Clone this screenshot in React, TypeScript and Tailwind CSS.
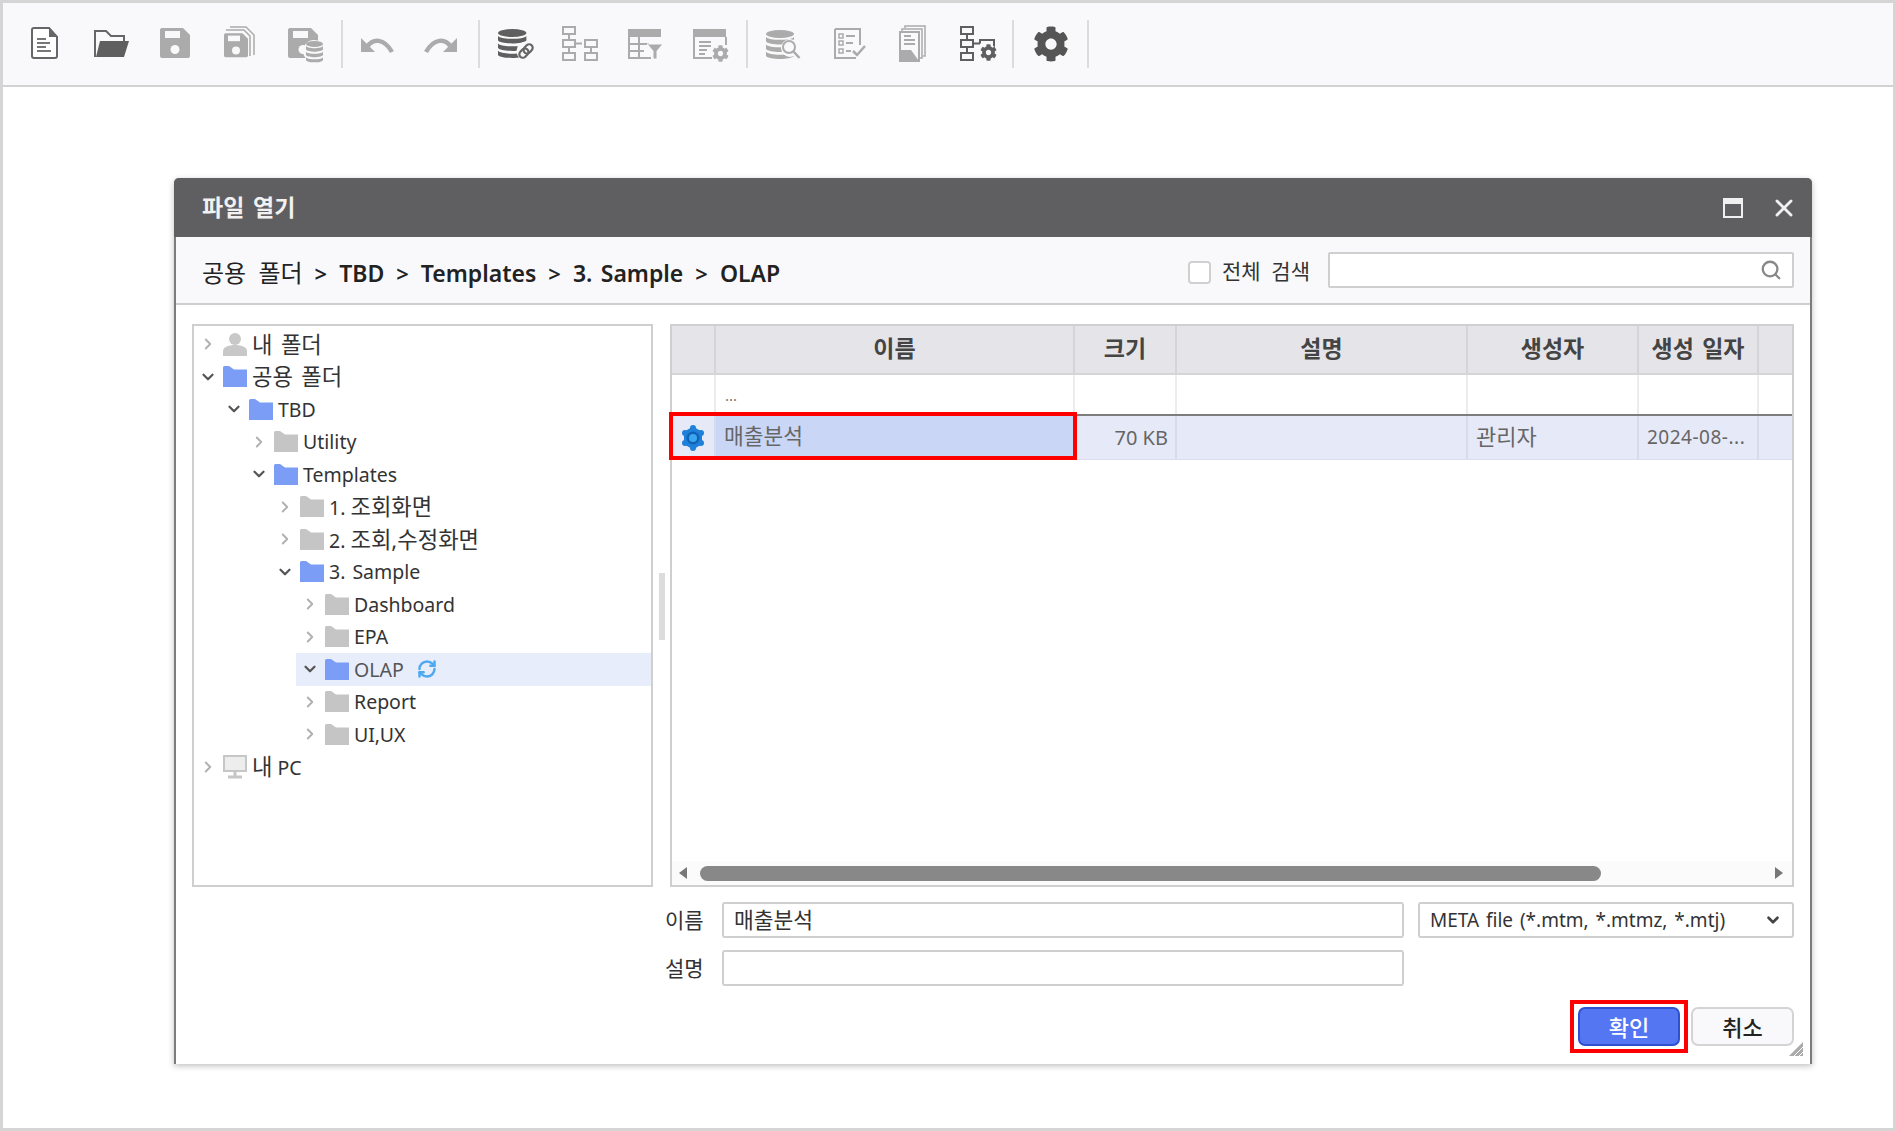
import { ChevronDown, ChevronRight, RefreshCw, Search, X } from 'lucide-react';
import { FaCog } from 'react-icons/fa';
import type { ReactNode } from 'react';

const DARK = '#5f5f5f';
const LIGHT = '#ababab';
const FONT = "font-['Noto_Sans','Noto_Sans_CJK_KR',sans-serif]";

const INDENT = ['ml-0', 'ml-[26px]', 'ml-[51px]', 'ml-[77px]', 'ml-[102px]'];

function Ko({ children }: { children: ReactNode }) {
  return <span className="text-[1.14em] [word-spacing:0.12em]">{children}</span>;
}

function Floppy({ fill = LIGHT, hole = 4.5 }: { fill?: string; hole?: number }) {
  return (
    <>
      <path d="M5 6a2 2 0 0 1 2-2h21l7 7v21a2 2 0 0 1-2 2H7a2 2 0 0 1-2-2z" fill={fill} />
      <rect x="10" y="7" width="15" height="7" fill="#f9f9fb" />
      <circle cx="20" cy="25.5" r={hole} fill="#f9f9fb" />
    </>
  );
}

function Db({ color, top }: { color: string; top?: string }) {
  return (
    <>
      <ellipse cx="10" cy="3.5" rx="10" ry="3.5" fill={top ?? color} />
      <path d="M0 6c2 3.4 18 3.4 20 0v4c-2 3.4-18 3.4-20 0z" fill={color} />
      <path d="M0 12.5c2 3.4 18 3.4 20 0v4c-2 3.4-18 3.4-20 0z" fill={color} />
      <path d="M0 19c2 3.4 18 3.4 20 0v3.5C18 26 2 26 0 22.5z" fill={color} />
    </>
  );
}

function Nodes({ color }: { color: string }) {
  return (
    <g fill="none" stroke={color} strokeWidth="2">
      <rect x="3" y="3" width="12" height="7" />
      <rect x="3" y="16" width="12" height="7" />
      <rect x="3" y="29" width="12" height="7" />
      <path d="M9 10v6M9 23v6M15 19.5h7" />
    </g>
  );
}

const ICONS: ReactNode[] = [
  <g key="new">
    <path d="M9 4h15l8 9v19a2 2 0 0 1-2 2H9a2 2 0 0 1-2-2V6a2 2 0 0 1 2-2z" fill="#fff" stroke="#666" strokeWidth="2" />
    <path d="M24 3l9 10h-9z" fill="#666" />
    <path d="M12 15h9M12 19h13M12 23h9M12 27h14" stroke="#777" strokeWidth="2" />
  </g>,
  <g key="open">
    <path d="M4 33V7h11l5 5h13v5" fill="none" stroke="#666" strokeWidth="2" />
    <path d="M9 17h29l-5 16H5z" fill={DARK} />
  </g>,
  <g key="save"><Floppy /></g>,
  <g key="saveall">
    <path d="M11 3h16l8 8v20" fill="none" stroke={LIGHT} strokeWidth="1.5" />
    <path d="M7 6h18l6 6v20" fill="none" stroke={LIGHT} strokeWidth="1.5" />
    <g transform="translate(1 6) scale(0.8)"><Floppy hole={5} /></g>
  </g>,
  <g key="savedb">
    <g transform="translate(-2 0)"><Floppy /></g>
    <circle cx="29" cy="27" r="11" fill="#f9f9fb" />
    <g transform="translate(21 17) scale(0.85)"><Db color={LIGHT} /></g>
  </g>,
  <g key="undo">
    <path d="M10 23C16 14 27 14 35 28" fill="none" stroke={LIGHT} strokeWidth="4.500" />
    <path d="M4 14v14h14z" fill={LIGHT} />
  </g>,
  <g key="redo">
    <path d="M30 23C24 14 13 14 5 28" fill="none" stroke={LIGHT} strokeWidth="4.500" />
    <path d="M36 14v14H22z" fill={LIGHT} />
  </g>,
  <g key="dblink">
    <g transform="translate(2 5) scale(1.42 1.15)"><Db color={DARK} /></g>
    <circle cx="30" cy="27" r="9.500" fill="#f9f9fb" />
    <g fill="none" stroke="#666" strokeWidth="2.200" transform="rotate(-45 30 27)">
      <rect x="22" y="23.500" width="10" height="7" rx="3.500" />
      <rect x="28" y="23.500" width="10" height="7" rx="3.500" />
    </g>
  </g>,
  <g key="tree">
    <Nodes color={LIGHT} />
    <rect x="25" y="16" width="12" height="7" fill="none" stroke={LIGHT} strokeWidth="2" />
    <rect x="25" y="29" width="12" height="7" fill="none" stroke={LIGHT} strokeWidth="2" />
    <path d="M31 23v6" stroke={LIGHT} strokeWidth="2" />
  </g>,
  <g key="tablefilter">
    <rect x="3" y="5" width="33" height="8" fill={LIGHT} />
    <path d="M4 13v21h22M4 20h20M4 27h15M14 13v21" fill="none" stroke={LIGHT} strokeWidth="2" />
    <path d="M22 20h16l-6 7v8h-4v-8z" fill={LIGHT} stroke="#f9f9fb" strokeWidth="1" />
  </g>,
  <g key="wingear">
    <rect x="3" y="5" width="33" height="8" fill={LIGHT} />
    <path d="M4 13v21h18M36 13v8" fill="none" stroke={LIGHT} strokeWidth="2" />
    <path d="M9 18h12M9 22h12M9 26h8M9 30h6" stroke={LIGHT} strokeWidth="2" />
    <FaCog x="22" y="21" size={17} color={LIGHT} />
  </g>,
  <g key="dbsearch">
    <g transform="translate(3 6) scale(1.4 1.15)"><Db color={LIGHT} /></g>
    <circle cx="27" cy="24" r="9" fill="#f9f9fb" />
    <circle cx="26" cy="23" r="6" fill="#f9f9fb" stroke={LIGHT} strokeWidth="2" />
    <path d="M30.500 27.500l6 6.500" stroke={LIGHT} strokeWidth="2.500" />
  </g>,
  <g key="checklist">
    <path d="M6 5h25v16M6 5v29h21" fill="none" stroke={LIGHT} strokeWidth="2" />
    <g fill="none" stroke={LIGHT} strokeWidth="1.500">
      <rect x="10" y="10" width="4" height="4" />
      <rect x="10" y="17" width="4" height="4" />
      <rect x="10" y="25" width="4" height="4" />
    </g>
    <path d="M17 12h9M17 19h7M17 27h5" stroke={LIGHT} strokeWidth="2" />
    <path d="M24 27l4 4 8-9" fill="none" stroke={LIGHT} strokeWidth="2.500" />
  </g>,
  <g key="docs">
    <path d="M11 4V2h20v30h-2" fill="none" stroke={LIGHT} strokeWidth="1.500" />
    <path d="M8 7V5h20v29h-2" fill="none" stroke={LIGHT} strokeWidth="1.500" />
    <path d="M6 8h19v29H6z" fill="#f9f9fb" stroke={LIGHT} strokeWidth="2" />
    <path d="M6 26h11l8 11H6z" fill={LIGHT} />
    <path d="M10 12h7M10 16h11M10 20h11" stroke={LIGHT} strokeWidth="2" />
  </g>,
  <g key="nodegear">
    <Nodes color={DARK} />
    <path d="M22 19.500V16h14v7" fill="none" stroke={DARK} strokeWidth="2" />
    <circle cx="30" cy="28" r="8" fill="#f9f9fb" />
    <FaCog x="22" y="20" size={17} color={DARK} />
  </g>,
  <FaCog key="gear" x="2" y="2" size={36} color="#555" />,
];

function ToolIcon({ index, className = '' }: { index: number; className?: string }) {
  return (
    <div className={`flex w-[64px] shrink-0 justify-center ${className}`}>
      <svg width="40" height="40" viewBox="0 0 40 40">
        {ICONS[index]}
      </svg>
    </div>
  );
}

function ToolSep({ className }: { className: string }) {
  return <div className={`h-[48px] w-[2px] shrink-0 bg-[#dcdcdf] ${className}`} />;
}

function Toolbar() {
  return (
    <div className="flex h-[84px] shrink-0 items-center border-b-2 border-[#d2d2d2] bg-[#f9f9fb] pl-[10px]">
      <ToolIcon index={0} />
      <ToolIcon index={1} className="ml-[2px]" />
      <ToolIcon index={2} />
      <ToolIcon index={3} />
      <ToolIcon index={4} className="ml-[2px]" />
      <ToolSep className="ml-[4px] mr-[2px]" />
      <ToolIcon index={5} />
      <ToolIcon index={6} />
      <ToolSep className="ml-[5px] mr-[4px]" />
      <ToolIcon index={7} />
      <ToolIcon index={8} />
      <ToolIcon index={9} className="ml-[1px]" />
      <ToolIcon index={10} className="ml-[1px]" />
      <ToolSep className="ml-[4px] mr-[3px]" />
      <ToolIcon index={11} />
      <ToolIcon index={12} className="ml-[2px]" />
      <ToolIcon index={13} className="ml-[1px]" />
      <ToolIcon index={14} />
      <ToolSep className="ml-[2px] mr-[5px]" />
      <ToolIcon index={15} />
      <ToolSep className="ml-[4px]" />
    </div>
  );
}

function Folder({ color }: { color: string }) {
  return (
    <svg width="24" height="21" viewBox="0 0 24 21" className="shrink-0">
      <path d="M0 1.500Q0 0 1.500 0H6l5 3.500h13V21H0z" fill={color} />
    </svg>
  );
}

function Person() {
  return (
    <svg width="24" height="24" viewBox="0 0 24 24" className="shrink-0">
      <circle cx="12" cy="7" r="6" fill="#c8c8c8" />
      <path d="M0 24v-5c0-4 6-6 12-6s12 2 12 6v5z" fill="#c8c8c8" />
    </svg>
  );
}

function Monitor() {
  return (
    <svg width="24" height="24" viewBox="0 0 24 24" className="shrink-0">
      <rect x="1" y="1" width="22" height="15" fill="#ededed" stroke="#c6c6c6" strokeWidth="2" />
      <path d="M12 16v5M5 22h14" stroke="#c6c6c6" strokeWidth="3" />
    </svg>
  );
}

function FileIcon() {
  const lobes = [
    [12, 4],
    [20, 9],
    [20, 19],
    [12, 24],
    [4, 19],
    [4, 9],
  ];
  return (
    <svg width="24" height="28" viewBox="0 0 24 28">
      <path d="M12 2.500l9 5.200v12.600l-9 5.200-9-5.200V7.700z" fill="#1f80da" />
      {lobes.map(([cx, cy]) => (
        <circle key={`${cx}-${cy}`} cx={cx} cy={cy} r="3" fill="#1f80da" />
      ))}
      <circle cx="12" cy="14" r="6.500" fill="#0f62b4" />
      <circle cx="12" cy="14" r="4" fill="#3aa6f2" />
    </svg>
  );
}

type Node = {
  level: number;
  open?: boolean;
  icon: ReactNode;
  label: ReactNode;
  active?: boolean;
};

const BLUE = '#7b9df5';
const GRAY = '#c5c5c5';

const TREE: Node[] = [
  { level: 0, icon: <Person />, label: <Ko>내 폴더</Ko> },
  { level: 0, open: true, icon: <Folder color={BLUE} />, label: <Ko>공용 폴더</Ko> },
  { level: 1, open: true, icon: <Folder color={BLUE} />, label: 'TBD' },
  { level: 2, icon: <Folder color={GRAY} />, label: 'Utility' },
  { level: 2, open: true, icon: <Folder color={BLUE} />, label: 'Templates' },
  { level: 3, icon: <Folder color={GRAY} />, label: <>1. <Ko>조회화면</Ko></> },
  { level: 3, icon: <Folder color={GRAY} />, label: <>2. <Ko>조회,수정화면</Ko></> },
  { level: 3, open: true, icon: <Folder color={BLUE} />, label: <span className="[word-spacing:0.1em]">3. Sample</span> },
  { level: 4, icon: <Folder color={GRAY} />, label: 'Dashboard' },
  { level: 4, icon: <Folder color={GRAY} />, label: 'EPA' },
  { level: 4, open: true, active: true, icon: <Folder color={BLUE} />, label: 'OLAP' },
  { level: 4, icon: <Folder color={GRAY} />, label: 'Report' },
  { level: 4, icon: <Folder color={GRAY} />, label: 'UI,UX' },
  { level: 0, icon: <Monitor />, label: <><Ko>내</Ko> PC</> },
];

function TreePanel() {
  return (
    <div className="h-[563px] w-[461px] shrink-0 border-2 border-[#cfcfcf] bg-white pt-[2px] text-[19.500px] text-[#333]">
      {TREE.map((node, i) => (
        <div
          key={i}
          className={`flex h-[32.5px] items-center whitespace-nowrap ${INDENT[node.level]} ${node.active ? 'bg-[#e8edfc]' : ''}`}
        >
          <div className="flex w-[26px] shrink-0 justify-center pl-[1px]">
            {node.open ? (
              <ChevronDown size={18} strokeWidth={3} color="#555" />
            ) : (
              <ChevronRight size={18} strokeWidth={2.500} color="#b0b0b0" />
            )}
          </div>
          <div className="ml-[3px] flex w-[24px] shrink-0">{node.icon}</div>
          <div className={`ml-[5px] ${node.active ? 'text-[#555]' : ''}`}>{node.label}</div>
          {node.active && <RefreshCw size={20} strokeWidth={3} color="#4fa9ef" className="ml-[13px]" />}
        </div>
      ))}
    </div>
  );
}

const COLS = 'grid grid-cols-[44px_359px_102px_291px_171px_120px_33px]';

function Grid() {
  const head = ['', '이름', '크기', '설명', '생성자', '생성 일자', ''];
  return (
    <div className="relative flex h-[563px] w-[1124px] shrink-0 flex-col border-2 border-[#cfcfcf] bg-white">
      <div className={`${COLS} h-[49px] shrink-0 border-b-2 border-[#d5d5d8] bg-[#e5e5e9]`}>
        {head.map((h, i) => (
          <div
            key={i}
            className={`flex items-center justify-center pb-[2px] text-[23px] font-semibold text-[#444] [word-spacing:0.1em] ${i < 6 ? 'border-r-2 border-[#d5d5d8]' : ''}`}
          >
            {h}
          </div>
        ))}
      </div>
      <div className={`${COLS} h-[39px] shrink-0`}>
        {head.map((_, i) => (
          <div
            key={i}
            className={`pl-[9px] pt-[9px] text-[15px] text-[#777] ${i < 6 ? 'border-r-2 border-[#ececee]' : ''}`}
          >
            {i === 1 ? '...' : ''}
          </div>
        ))}
      </div>
      <div className={`${COLS} h-[46px] shrink-0 border-b border-t-2 border-b-[#d9ddee] border-t-[#7d7d7d] bg-[#e6eaf8] text-[#666]`}>
        <div className="flex items-center justify-center border-r-2 border-[#d6dbee]">
          <FileIcon />
        </div>
        <div className="flex items-center border-r-2 border-[#d6dbee] bg-[#cad6f6] pl-[8px] pb-[3px] text-[21.500px]">매출분석</div>
        <div className="flex items-center justify-end border-r-2 border-[#d6dbee] pr-[7px] text-[20px]">70 KB</div>
        <div className="border-r-2 border-[#d6dbee]" />
        <div className="flex items-center border-r-2 border-[#d6dbee] pl-[8px] pb-[3px] text-[22px]">관리자</div>
        <div className="flex items-center border-r-2 border-[#d6dbee] pl-[8px] text-[19px] [letter-spacing:0.5px]">2024-08-...</div>
        <div />
      </div>
      <div className="flex-1" />
      <div className="flex h-[24px] shrink-0 items-center bg-[#fbfbfb]">
        <div className="ml-[7px] h-0 w-0 border-y-[6px] border-r-[8px] border-y-transparent border-r-[#777]" />
        <div className="ml-[13px] h-[15px] w-[901px] rounded-full bg-[#888]" />
        <div className="ml-auto mr-[9px] h-0 w-0 border-y-[6px] border-l-[8px] border-y-transparent border-l-[#777]" />
      </div>
      {/* highlight on the selected name */}
      <div className="absolute left-[-3px] top-[86px] h-[48px] w-[408px] border-4 border-[#f00]" />
    </div>
  );
}

function Dialog() {
  return (
    <div className="relative ml-[171px] mt-[91px] flex h-[886px] w-[1638px] flex-col overflow-visible rounded-t-[5px] border-x-2 border-x-[#7c7c7c] bg-white shadow-[0_2px_6px_rgba(0,0,0,0.25)]">
      <div className="-mx-[2px] flex h-[59px] shrink-0 items-center rounded-t-[5px] bg-[#5f5f61] pl-[28px] pr-[14px]">
        <span className="text-[23px] font-semibold text-[#f2f2f2] [word-spacing:0.12em]">파일 열기</span>
        <div className="ml-auto h-[20px] w-[20px] border-2 border-t-[6px] border-[#f0f0f0]" />
        <X size={28} strokeWidth={2.500} color="#f0f0f0" className="ml-[27px]" />
      </div>

      <div className="flex h-[68px] shrink-0 items-center border-b-2 border-[#cfcfcf] bg-[#f9f9fb] pl-[26px] pr-[16px]">
        <div className="flex items-center gap-[12px] whitespace-nowrap pt-[6px] text-[23px] font-semibold text-[#222]">
          <span className="font-normal [word-spacing:0.25em] text-[24px]">공용 폴더</span>
          <span className="text-[22px]">&gt;</span>
          <span>TBD</span>
          <span className="text-[22px]">&gt;</span>
          <span>Templates</span>
          <span className="text-[22px]">&gt;</span>
          <span className="[word-spacing:0.1em]">3. Sample</span>
          <span className="text-[22px]">&gt;</span>
          <span>OLAP</span>
        </div>
        <div className="ml-auto mt-[4px] h-[23px] w-[23px] rounded-[4px] border-2 border-[#d0d0d0] bg-white" />
        <span className="ml-[11px] mt-[4px] text-[21px] text-[#333] [word-spacing:0.25em]">전체 검색</span>
        <div className="ml-[18px] flex h-[36px] w-[466px] items-center justify-end rounded-[2px] border-2 border-[#cfcfcf] bg-white pr-[10px]">
          <Search size={22} strokeWidth={2.500} color="#888" />
        </div>
      </div>

      <div className="relative flex shrink-0 gap-[17px] pl-[16px] pt-[19px]">
        <TreePanel />
        <Grid />
        <div className="absolute left-[483px] top-[268px] h-[67px] w-[6px] bg-[#dcdcdc]" />
      </div>

      <div className="mt-[15px] flex h-[36px] shrink-0 items-center pl-[489px]">
        <span className="w-[57px] pt-[2px] text-[21px] text-[#333]">이름</span>
        <div className="flex h-full w-[682px] items-center rounded-[3px] border-2 border-[#cfcfcf] pl-[10px] text-[21.500px] text-[#333]">매출분석</div>
        <div className="ml-[14px] flex h-full w-[376px] items-center justify-between rounded-[3px] border-2 border-[#cfcfcf] pl-[10px] pr-[10px] text-[19px] text-[#333]">
          <span className="[word-spacing:0.1em]">META file (*.mtm, *.mtmz, *.mtj)</span>
          <ChevronDown size={18} strokeWidth={3.500} color="#444" />
        </div>
      </div>
      <div className="mt-[12px] flex h-[36px] shrink-0 items-center pl-[489px]">
        <span className="w-[57px] pt-[2px] text-[21px] text-[#333]">설명</span>
        <div className="h-full w-[682px] rounded-[3px] border-2 border-[#cfcfcf]" />
      </div>

      <div className="mt-[21px] flex h-[39px] shrink-0 justify-end gap-[11px] pr-[16px]">
        <div className="relative flex w-[102px] items-center justify-center rounded-[7px] border-2 border-[#2f50cf] bg-[#5576f3] pt-[2px] text-[22px] font-medium text-white">
          확인
          <div className="absolute -inset-x-[10px] -inset-y-[9px] border-4 border-[#f00]" />
        </div>
        <div className="flex w-[103px] items-center justify-center rounded-[7px] border-2 border-[#d4d4d4] bg-[#f9f9fb] pt-[2px] text-[22px] font-medium text-[#222]">취소</div>
      </div>

      <svg width="14" height="14" viewBox="0 0 14 14" className="absolute bottom-[8px] right-[7px]">
        <path d="M14 0v14H0z" fill="#aaa" />
        <path d="M5 14L14 5M10 14l4-4" stroke="#fff" strokeWidth="1" />
      </svg>
    </div>
  );
}

export default function App() {
  return (
    <div className={`flex h-[1131px] w-[1896px] flex-col overflow-hidden border-[3px] border-[#d5d5d5] bg-white ${FONT}`}>
      <Toolbar />
      <Dialog />
    </div>
  );
}
